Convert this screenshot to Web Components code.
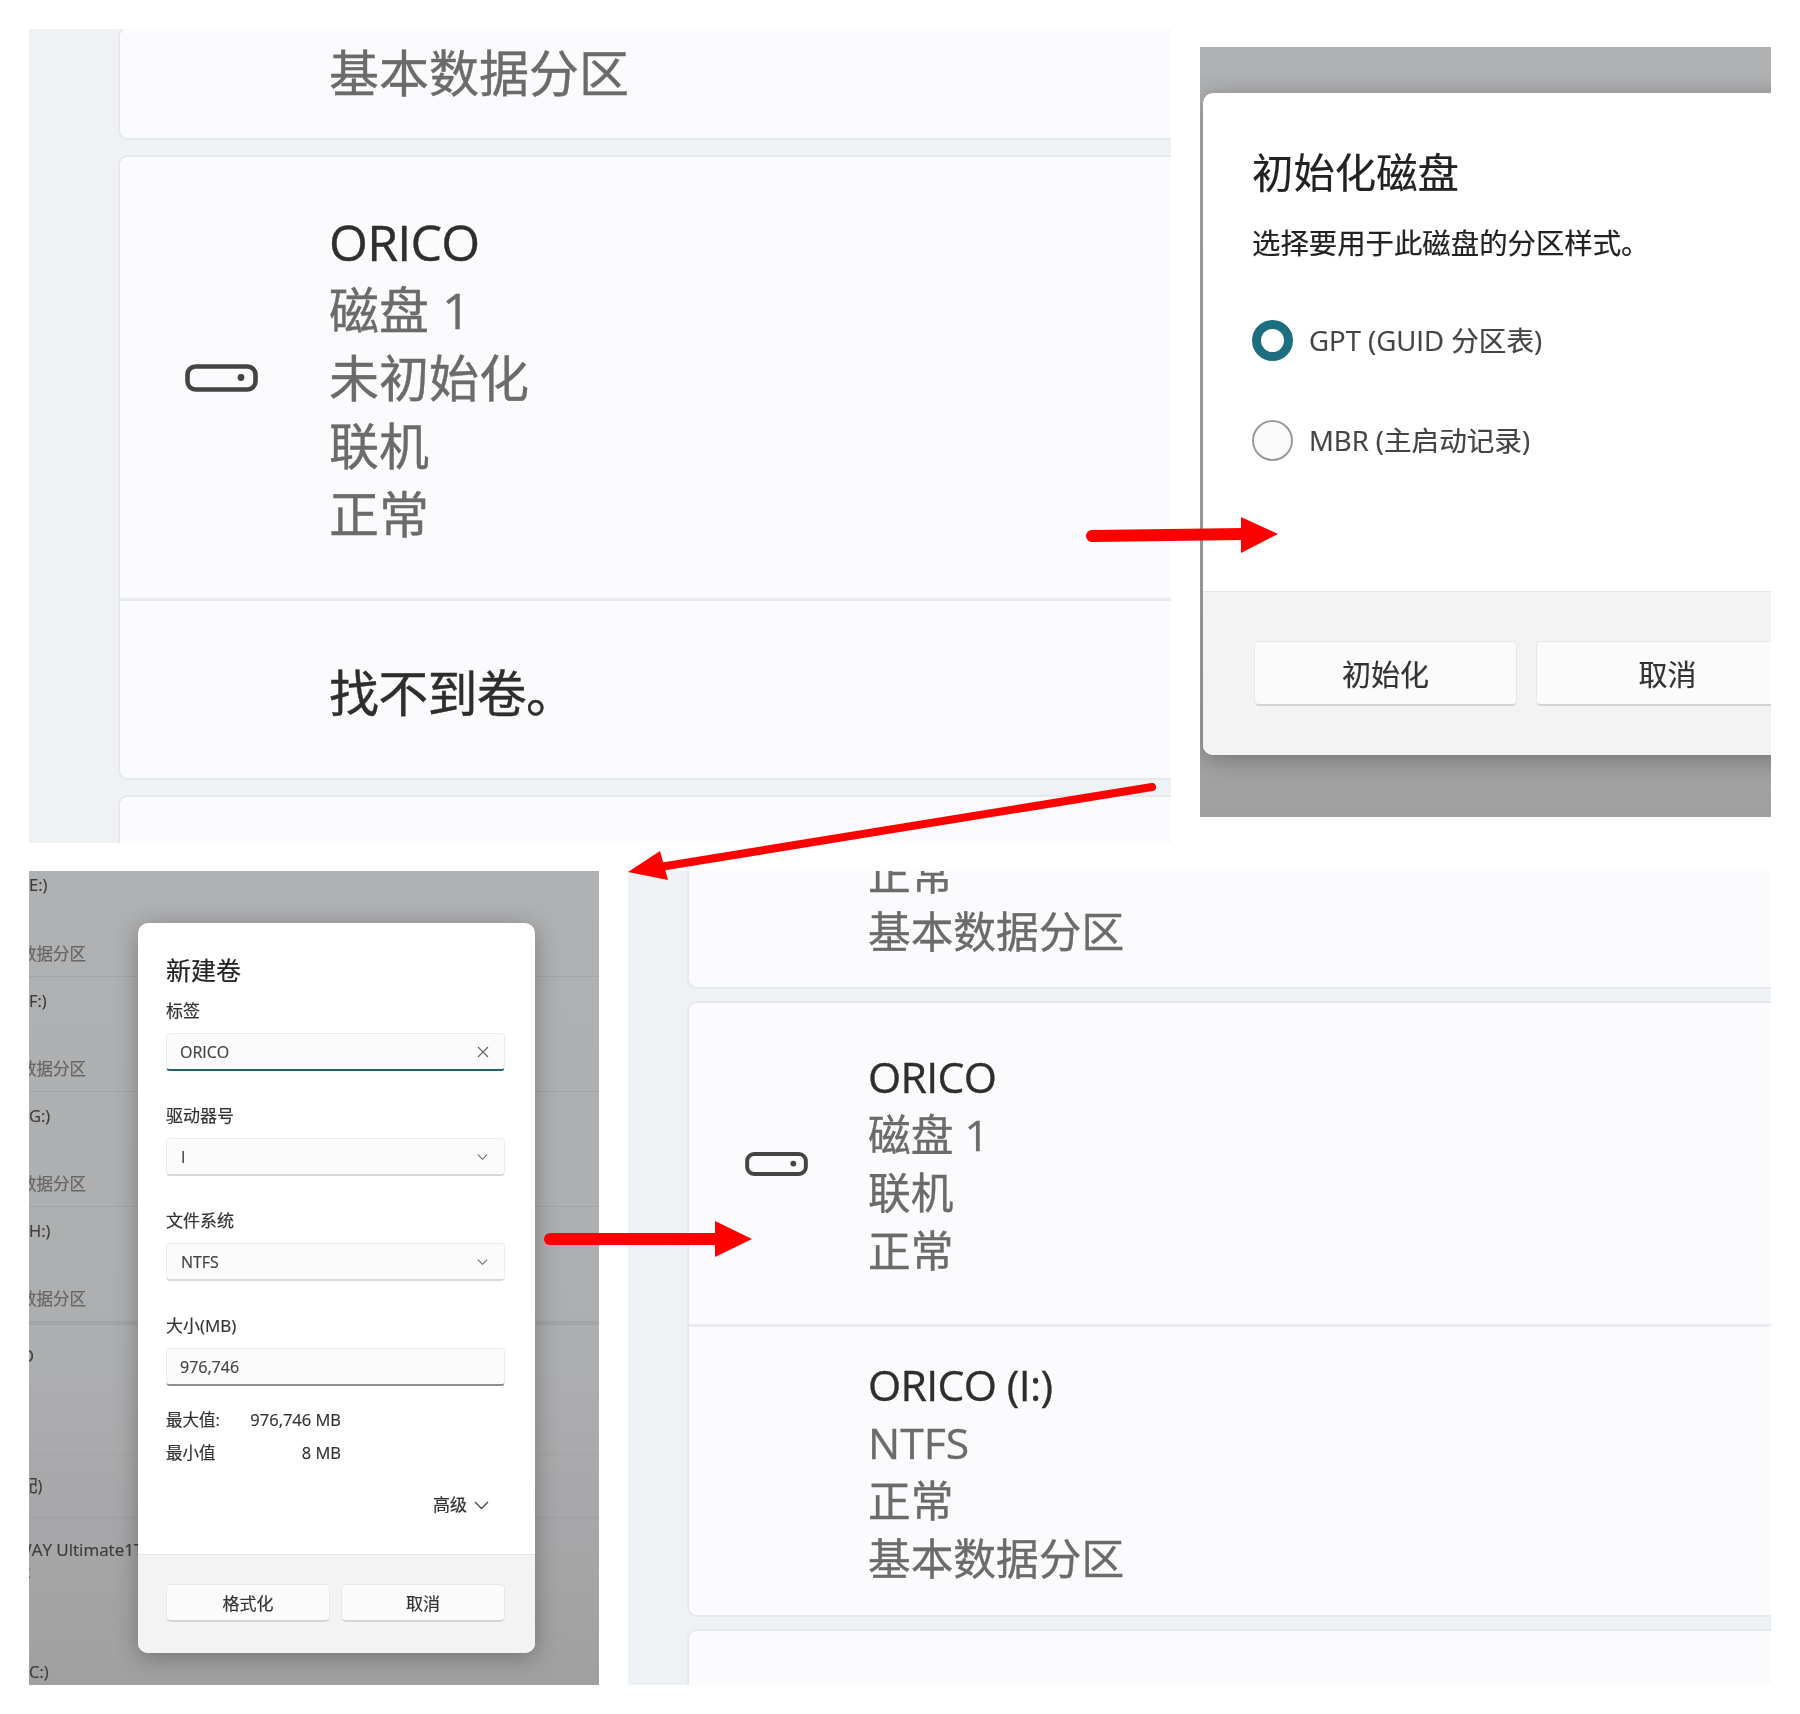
<!DOCTYPE html>
<html lang="zh-CN">
<head>
<meta charset="utf-8">
<title>ORICO</title>
<style>
    html, body { margin: 0; background: #fff; }
    body { font-family: "Open Sans", "Noto Sans CJK SC", sans-serif; }
</style>
</head>
<body>
<shot-page>
    <disk-panel slot="a" style="--w:1142px;--band:89px;--font:50px;--lh:68px;--pad:209px;--ico-x:65px;--ico-w:73px;--top:-3px;--gap:15px;--sw:.4px">
        <disk-card style="--pt:11px;--pb:31px"><disk-row><span>基本数据分区</span></disk-row></disk-card>
        <disk-card style="--pt:51px;--pb:0px">
            <disk-row icon style="--rb:50px">
                <b>ORICO</b><span>磁盘 1</span><span>未初始化</span><span>联机</span><span>正常</span>
            </disk-row>
            <disk-row line style="--rh:180px;--rt:6px"><b>找不到卷。</b></disk-row>
        </disk-card>
        <disk-card style="--pt:60px;--pb:0px"></disk-card>
    </disk-panel>

    <scrim-panel slot="b" style="--w:571px;--mt:18px;--h:770px">
        <modal-box style="--x:3px;--y:46px;--mw:600px;--mh:662px;--footer:164px;--fpad:49px 0 0 51px;--fgap:19px;--bw:263px;--bh:65px;--bf:29px">
            <init-body></init-body>
            <dlg-button slot="footer">初始化</dlg-button>
            <dlg-button slot="footer">取消</dlg-button>
        </modal-box>
    </scrim-panel>

    <scrim-panel slot="c" style="--w:570px;--h:814px">
        <back-list></back-list>
        <modal-box style="--x:109px;--y:52px;--mw:397px;--mh:730px;--footer:99px;--fpad:29px 0 0 28px;--fgap:11px;--bw:164px;--bh:38px;--bf:17px">
            <volume-body></volume-body>
            <dlg-button slot="footer">格式化</dlg-button>
            <dlg-button slot="footer">取消</dlg-button>
        </modal-box>
    </scrim-panel>

    <disk-panel slot="d" style="--w:1143px;--band:59px;--font:42.7px;--lh:58px;--pad:179px;--ico-x:56px;--ico-w:63px;--top:-28px;--gap:12px;--sw:.35px">
        <disk-card style="--pt:0px;--pb:26px"><disk-row><span>正常</span><span>基本数据分区</span></disk-row></disk-card>
        <disk-card style="--pt:45px;--pb:0px">
            <disk-row icon style="--rb:44px">
                <b>ORICO</b><span>磁盘 1</span><span>联机</span><span>正常</span>
            </disk-row>
            <disk-row line style="--rt:29px;--rb:27px">
                <b>ORICO (I:)</b><span>NTFS</span><span>正常</span><span>基本数据分区</span>
            </disk-row>
        </disk-card>
        <disk-card style="--pt:60px;--pb:0px"></disk-card>
    </disk-panel>

    <arrow-layer slot="overlay"></arrow-layer>
</shot-page>

<script>
class ShotPage extends HTMLElement {
    constructor() {
        super();
        this.attachShadow({ mode: 'open' }).innerHTML = `
            <style>
                :host { display: block; position: relative; width: 1800px; height: 1714px; box-sizing: border-box; padding: 29px; overflow: hidden; }
                .row { display: flex; gap: 29px; align-items: flex-start; }
                .row + .row { margin-top: 28px; }
            </style>
            <div class="row"><slot name="a"></slot><slot name="b"></slot></div>
            <div class="row"><slot name="c"></slot><slot name="d"></slot></div>
            <slot name="overlay"></slot>
        `;
    }
}

class DiskPanel extends HTMLElement {
    constructor() {
        super();
        this.attachShadow({ mode: 'open' }).innerHTML = `
            <style>
                :host { display: block; width: var(--w); height: 814px; overflow: hidden; background: #eff2f5;
                        box-sizing: border-box; padding-left: var(--band); filter: blur(.6px); -webkit-text-stroke: var(--sw) currentColor; }
                .list { display: flex; flex-direction: column; gap: var(--gap); margin-top: var(--top, 0); }
            </style>
            <div class="list"><slot></slot></div>
        `;
    }
}

class DiskCard extends HTMLElement {
    constructor() {
        super();
        this.attachShadow({ mode: 'open' }).innerHTML = `
            <style>
                :host { display: block; background: #fbfbfd; border-radius: 10px 0 0 10px; box-sizing: border-box;
                        padding: var(--pt) 0 var(--pb); border: 2px solid #e6e8eb; border-right: 0; }
                :host(:empty) { min-height: 200px; }
            </style>
            <slot></slot>
        `;
    }
}

class DiskRow extends HTMLElement {
    constructor() {
        super();
        this.attachShadow({ mode: 'open' }).innerHTML = `
            <style>
                :host { display: flex; flex-direction: column; justify-content: center; position: relative; box-sizing: border-box;
                        padding: var(--rt, 0) 0 var(--rb, 0) var(--pad); min-height: var(--rh, 0);
                        font-size: var(--font); line-height: var(--lh); color: #6b6b6b; }
                :host([line]) { border-top: 3px solid #e9ebee; }
                svg { position: absolute; left: var(--ico-x); top: calc((100% - var(--rb, 0px)) / 2); width: var(--ico-w); transform: translateY(-50%); }
                ::slotted(b) { font-weight: 400; color: #2e2e2e; letter-spacing: -.015em; }
                ::slotted(span) { display: block; }
            </style>
            ${this.hasAttribute('icon') ? `<svg viewBox="0 0 73 28" fill="none">
                <rect x="2.5" y="2.5" width="68" height="23" rx="8" stroke="#444" stroke-width="4.6"/>
                <circle cx="56" cy="13.5" r="3.4" fill="#444"/>
            </svg>` : ''}
            <slot></slot>
        `;
    }
}

class ScrimPanel extends HTMLElement {
    constructor() {
        super();
        this.attachShadow({ mode: 'open' }).innerHTML = `
            <style>
                :host { display: block; position: relative; width: var(--w); height: var(--h); margin-top: var(--mt, 0); overflow: hidden;
                        background: linear-gradient(180deg, #b0b1b3 0%, #adaeb0 60%, #a0a0a1 100%); filter: blur(.5px); -webkit-text-stroke: .2px currentColor; }
            </style>
            <slot></slot>
        `;
    }
}

class ModalBox extends HTMLElement {
    constructor() {
        super();
        this.attachShadow({ mode: 'open' }).innerHTML = `
            <style>
                :host { display: flex; flex-direction: column; position: absolute; left: var(--x); top: var(--y);
                        width: var(--mw); height: var(--mh); background: #fff; border-radius: 10px; overflow: hidden;
                        box-shadow: 0 4px 24px rgba(0,0,0,.3); }
                .body { flex: 1; }
                .foot { height: var(--footer); box-sizing: border-box; padding: var(--fpad); background: #f3f3f3;
                        border-top: 1px solid #e6e6e6; display: flex; gap: var(--fgap); align-items: flex-start; }
            </style>
            <div class="body"><slot></slot></div>
            <div class="foot"><slot name="footer"></slot></div>
        `;
    }
}

class DlgButton extends HTMLElement {
    constructor() {
        super();
        this.attachShadow({ mode: 'open' }).innerHTML = `
            <style>
                :host { display: flex; align-items: center; justify-content: center; flex: none; box-sizing: border-box;
                        width: var(--bw); height: var(--bh); font-size: var(--bf); color: #333; background: #fbfbfb;
                        border: 1px solid #e8e8e8; border-bottom: 2px solid #d4d4d4; border-radius: 5px; }
            </style>
            <slot></slot>
        `;
    }
}

class InitBody extends HTMLElement {
    constructor() {
        super();
        this.attachShadow({ mode: 'open' }).innerHTML = `
            <style>
                :host { display: block; padding: 53px 0 0 49px; color: #222; }
                h2 { margin: 0; font-size: 41.4px; font-weight: 400; line-height: 52px; }
                p { margin: 27px 0 0; font-size: 28.4px; line-height: 36px; white-space: nowrap; }
                .opts { margin-top: 59px; display: flex; flex-direction: column; gap: 59px; }
                .opt { display: flex; align-items: center; gap: 16px; font-size: 27.6px; line-height: 41px; color: #444; }
                i { flex: none; width: 41px; height: 41px; box-sizing: border-box; border-radius: 50%; }
                .on { border: 9px solid #1d6f80; background: #fff; }
                .off { border: 2px solid #9a9a9a; background: #fbfbfb; }
            </style>
            <h2>初始化磁盘</h2>
            <p>选择要用于此磁盘的分区样式。</p>
            <div class="opts">
                <div class="opt"><i class="on"></i>GPT (GUID 分区表)</div>
                <div class="opt"><i class="off"></i>MBR (主启动记录)</div>
            </div>
        `;
    }
}

class TextBox extends HTMLElement {
    constructor() {
        super();
        const kind = this.getAttribute('kind') || '';
        const icon = kind === 'clear'
            ? '<svg viewBox="0 0 12 12" width="12" height="12"><path d="M1 1l10 10M11 1L1 11" stroke="#666" stroke-width="1.1" fill="none"/></svg>'
            : kind === 'select'
            ? '<svg viewBox="0 0 12 8" width="11" height="8"><path d="M1 1.5l5 5 5-5" stroke="#666" stroke-width="1.2" fill="none"/></svg>'
            : '';
        this.attachShadow({ mode: 'open' }).innerHTML = `
            <style>
                :host { display: flex; align-items: center; justify-content: space-between; box-sizing: border-box; height: 38px;
                        padding: 0 15px 0 13px; background: #fbfbfb; border: 1px solid #ececec; border-radius: 4px; font-size: 16px; color: #444; }
                :host([kind="clear"]) { border-bottom: 2px solid #1d6373; }
                :host([kind="plain"]) { border-bottom: 2px solid #8f8f8f; }
                :host([kind="select"]) { border-bottom: 2px solid #d8d8d8; padding-left: 14px; padding-right: 16px; }
            </style>
            <slot></slot>${icon}
        `;
    }
}

class FormField extends HTMLElement {
    constructor() {
        super();
        this.attachShadow({ mode: 'open' }).innerHTML = `
            <style>
                :host { display: flex; flex-direction: column; gap: 10px; font-size: 17px; line-height: 24px; color: #333; }
            </style>
            <div>${this.getAttribute('label')}</div>
            <slot></slot>
        `;
    }
}

class VolumeBody extends HTMLElement {
    constructor() {
        super();
        this.attachShadow({ mode: 'open' }).innerHTML = `
            <style>
                :host { display: block; padding: 30px 30px 0 28px; color: #333; }
                h2 { margin: 0 0 12px; font-size: 25px; font-weight: 400; line-height: 34px; color: #222; }
                .fields { display: flex; flex-direction: column; gap: 33px; }
                .stats { margin-top: 22px; width: 175px; display: grid; grid-template-columns: 1fr auto; row-gap: 9px; font-size: 16.5px; line-height: 24px; }
                .adv { margin: 28px 16px 0 0; display: flex; justify-content: flex-end; align-items: center; gap: 7px; font-size: 17px; line-height: 24px; }
            </style>
            <h2>新建卷</h2>
            <div class="fields">
                <form-field label="标签"><text-box kind="clear">ORICO</text-box></form-field>
                <form-field label="驱动器号"><text-box kind="select">I</text-box></form-field>
                <form-field label="文件系统"><text-box kind="select">NTFS</text-box></form-field>
                <form-field label="大小(MB)"><text-box kind="plain">976,746</text-box></form-field>
            </div>
            <div class="stats">
                <span>最大值:</span><span>976,746 MB</span>
                <span>最小值</span><span style="text-align:right">8 MB</span>
            </div>
            <div class="adv">高级 <svg viewBox="0 0 15 9" width="15" height="9"><path d="M1 1l6.5 6.5L14 1" stroke="#444" stroke-width="1.3" fill="none"/></svg></div>
        `;
    }
}

class BackList extends HTMLElement {
    constructor() {
        super();
        const rows = [[106, 3, 47, 'E:)'], [115, 13, 46, 'F:)'], [115, 13, 46, 'G:)'], [115, 13, 46, 'H:)']];
        const html = rows.map(([h, p, m, a]) => `<div class="r" style="height:${h}px;padding-top:${p}px"><div>${a}</div><div class="t" style="margin-top:${m}px">基本数据分区</div></div>`).join('');
        this.attachShadow({ mode: 'open' }).innerHTML = `
            <style>
                :host { display: block; font-size: 16.5px; color: #3c3c3c; line-height: 22px; }
                .r { box-sizing: border-box; border-bottom: 1px solid #a3a4a6; overflow: hidden; }
                .t { margin-left: -42px; color: #666; white-space: nowrap; }
                .e { box-sizing: border-box; border-bottom: 1px solid #a3a4a6; white-space: nowrap; overflow: hidden; }
            </style>
            ${html}
            <div class="e" style="height:133px;padding-top:20px;margin-left:-7px;border-top:3px solid #a3a4a6">D</div>
            <div class="e" style="height:64px;padding-top:20px;margin-left:-8px;border-bottom-width:3px">配)</div>
            <div class="e" style="height:128px;padding-top:20px;margin-left:-13px;font-size:17px">WAY Ultimate1TB<br><span style="margin-left:5px">2</span></div>
            <div class="e" style="padding-top:14px;border:0">C:)</div>
        `;
    }
}

class ArrowLayer extends HTMLElement {
    constructor() {
        super();
        this.attachShadow({ mode: 'open' }).innerHTML = `
            <style>
                :host { display: block; position: absolute; inset: 0; pointer-events: none; }
                svg { display: block; }
            </style>
            <svg width="1800" height="1714" fill="#ff0000" stroke="none">
                <path d="M1092 536L1244 534" stroke="#ff0000" stroke-width="12" stroke-linecap="round"/>
                <polygon points="1241,517 1278,534 1241,553"/>
                <path d="M1152 787L660 867" stroke="#ff0000" stroke-width="8" stroke-linecap="round"/>
                <polygon points="628,872 660,851 668,880"/>
                <path d="M550 1239L720 1239" stroke="#ff0000" stroke-width="12" stroke-linecap="round"/>
                <polygon points="715,1221 752,1239 715,1257"/>
            </svg>
        `;
    }
}

customElements.define('shot-page', ShotPage);
customElements.define('disk-panel', DiskPanel);
customElements.define('disk-card', DiskCard);
customElements.define('disk-row', DiskRow);
customElements.define('scrim-panel', ScrimPanel);
customElements.define('modal-box', ModalBox);
customElements.define('dlg-button', DlgButton);
customElements.define('init-body', InitBody);
customElements.define('text-box', TextBox);
customElements.define('form-field', FormField);
customElements.define('volume-body', VolumeBody);
customElements.define('back-list', BackList);
customElements.define('arrow-layer', ArrowLayer);
</script>
</body>
</html>
